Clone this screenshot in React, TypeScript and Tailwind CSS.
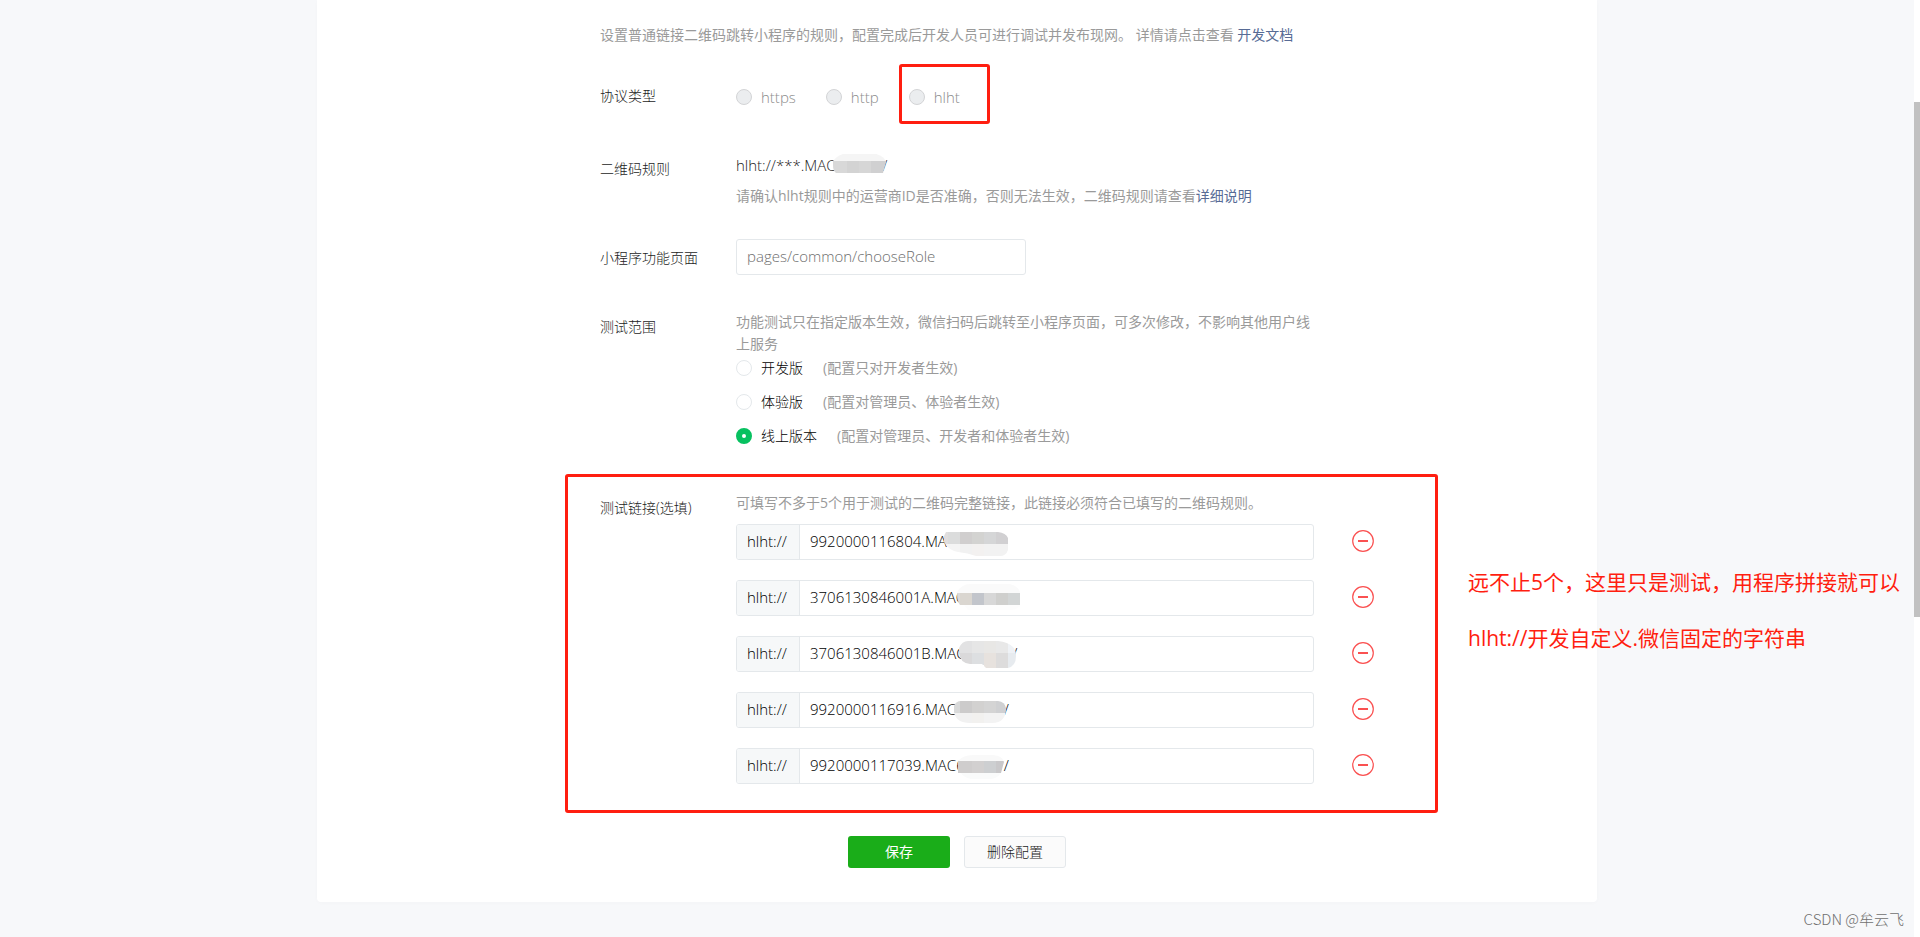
import { useState, type ReactNode } from "react";

type Cell = [x: number, y: number, w: number, h: number, fill: string];

interface MaskShape {
  left: string;
  width: number;
  height: number;
  clip: string;
  cells: Cell[];
}

interface TestLink {
  id: number;
  value: string;
  mask: MaskShape;
}

const TEST_LINKS: TestLink[] = [
  {
    id: 1,
    value: "9920000116804.MAC6          ",
    mask: {
      left: "left-[144px]",
      width: 64,
      height: 36,
      clip: "M2 8 H54 Q62 9 64 14 V26 Q62 32 56 32 H32 Q24 29 14 28 Q4 26 0 18 V12 Z",
      cells: [
        [0, 8, 4, 12, "#e0dede"],
        [4, 8, 12, 12, "#dbdcdc"],
        [16, 8, 12, 12, "#d0cece"],
        [28, 8, 12, 12, "#d3d3d1"],
        [40, 8, 12, 12, "#d5d6d7"],
        [52, 8, 12, 12, "#d1d0d2"],
        [0, 20, 16, 12, "#f4f4f4"],
        [16, 20, 12, 12, "#f1f1f1"],
        [28, 20, 12, 12, "#f3f1f0"],
        [40, 20, 24, 12, "#f2f2f2"],
      ],
    },
  },
  {
    id: 2,
    value: "3706130846001A.MAC           ",
    mask: {
      left: "left-[156px]",
      width: 64,
      height: 36,
      clip: "M1 12 Q6 4 14 4 H54 Q62 6 64 12 V26 Q60 30 54 30 H12 L8 25 H4 Q1 22 1 12 Z",
      cells: [
        [0, 4, 64, 9, "#fafafa"],
        [0, 13, 4, 12, "#dadada"],
        [4, 13, 12, 12, "#dad6d0"],
        [16, 13, 12, 12, "#c2c5cb"],
        [28, 13, 12, 12, "#d7d7d7"],
        [40, 13, 12, 12, "#cfcfcd"],
        [52, 13, 12, 12, "#d2d5d5"],
        [0, 25, 64, 5, "#fdfdfd"],
      ],
    },
  },
  {
    id: 3,
    value: "3706130846001B.MAC            /",
    mask: {
      left: "left-[158px]",
      width: 60,
      height: 36,
      clip: "M1 12 Q4 5 10 5 H40 Q50 6 55 11 Q58 14 58 20 Q58 30 50 32 H28 L24 28 H12 Q2 27 1 17 Z",
      cells: [
        [0, 5, 14, 12, "#e2e2e3"],
        [14, 5, 12, 12, "#e6e6e6"],
        [26, 5, 12, 12, "#e8e7e5"],
        [38, 5, 12, 12, "#e8e8e8"],
        [50, 5, 10, 12, "#eff2f6"],
        [0, 17, 14, 12, "#dad9da"],
        [14, 17, 12, 12, "#dddfe1"],
        [26, 17, 12, 15, "#e7e2de"],
        [38, 17, 12, 15, "#dddcdc"],
        [50, 17, 10, 15, "#e7ebef"],
      ],
    },
  },
  {
    id: 4,
    value: "9920000116916.MAC6          /",
    mask: {
      left: "left-[152px]",
      width: 56,
      height: 36,
      clip: "M2 14 Q4 9 9 9 H46 Q53 10 54 16 Q54 31 40 31 H18 Q4 31 2 20 Z",
      cells: [
        [0, 9, 8, 12, "#d9dada"],
        [8, 9, 12, 12, "#cccbcb"],
        [20, 9, 12, 12, "#d2d1d0"],
        [32, 9, 12, 12, "#d4d4d4"],
        [44, 9, 12, 12, "#cfd0d2"],
        [0, 21, 20, 11, "#f1f1f1"],
        [20, 21, 12, 11, "#f2f1ef"],
        [32, 21, 24, 11, "#f3f3f3"],
      ],
    },
  },
  {
    id: 5,
    value: "9920000117039.MAC6          /",
    mask: {
      left: "left-[157px]",
      width: 50,
      height: 36,
      clip: "M1 13 Q6 7 16 7 H36 Q46 8 47 14 L44 25 Q40 31 32 31 H14 Q6 29 4 25 H1 Z",
      cells: [
        [0, 7, 50, 6, "#f9f9f9"],
        [0, 13, 15, 12, "#cfcdcd"],
        [15, 13, 12, 12, "#d2d0d0"],
        [27, 13, 12, 12, "#cdcfd1"],
        [39, 13, 11, 12, "#c9c8ca"],
        [0, 25, 50, 6, "#fafbfb"],
      ],
    },
  },
];

const RULE_MASK: MaskShape = {
  left: "left-[96px]",
  width: 56,
  height: 26,
  clip: "M1 7 Q6 0 16 -1 H40 Q52 1 54 8 L51 19 H4 Q1 17 1 11 Z",
  cells: [
    [0, 0, 56, 7, "#f5f5f5"],
    [0, 7, 15, 12, "#d8d8d8"],
    [15, 7, 12, 12, "#d3d3d3"],
    [27, 7, 12, 12, "#d6d6d6"],
    [39, 7, 17, 12, "#d0d0d1"],
  ],
};

const SCOPES = [
  { id: "dev", name: "开发版", note: "(配置只对开发者生效)" },
  { id: "trial", name: "体验版", note: "(配置对管理员、体验者生效)" },
  { id: "online", name: "线上版本", note: "(配置对管理员、开发者和体验者生效)" },
];

function Mosaic({ id, shape }: { id: string; shape: MaskShape }) {
  return (
    <svg
      className={`pointer-events-none absolute top-0 ${shape.left}`}
      width={shape.width}
      height={shape.height}
      aria-hidden="true"
    >
      <clipPath id={id}>
        <path d={shape.clip} />
      </clipPath>
      <g clipPath={`url(#${id})`} shapeRendering="crispEdges">
        {shape.cells.map(([x, y, w, h, fill], i) => (
          <rect key={i} x={x} y={y} width={w} height={h} fill={fill} />
        ))}
      </g>
    </svg>
  );
}

function Row({ label, labelClass, children }: { label: ReactNode; labelClass: string; children: ReactNode }) {
  return (
    <div className="flex">
      <div className={`w-[136px] shrink-0 ${labelClass}`}>{label}</div>
      <div className="min-w-0 flex-1">{children}</div>
    </div>
  );
}

export default function App() {
  const [scope, setScope] = useState("online");
  const [page, setPage] = useState("pages/common/chooseRole");
  const [links, setLinks] = useState(TEST_LINKS);

  return (
    <div className="relative flex min-h-screen bg-[#f7f8fa] font-['Open_Sans','Noto_Sans_CJK_SC',sans-serif] text-sm leading-[22px] font-light text-[#1c1c1c]">
      <div className="min-w-0 flex-1">
        <main className="mx-auto max-w-[1280px] rounded-b-sm bg-white pt-6 pb-[34px] shadow-[0_1px_4px_rgba(0,0,0,0.02)]">
          <div className="pr-[159px] pl-[248px]">
            <div className="px-[35px]">
              <p className="font-normal text-[#9a9a9a]">
                设置普通链接二维码跳转小程序的规则，配置完成后开发人员可进行调试并发布现网。 详情请点击查看{" "}
                <a href="#doc" className="text-[#576b95]">
                  开发文档
                </a>
              </p>

              <div className="mt-[39px]">
                <Row label="协议类型" labelClass="">
                  <div className="flex gap-[30px] pt-px text-[15px] text-[#8c8c8c]">
                    {["https", "http", "hlht"].map((name) => (
                      <label key={name} className="relative flex items-center gap-[9px]">
                        <input
                          type="radio"
                          name="protocol"
                          disabled
                          className="size-4 appearance-none rounded-full border border-[#d3d4d6] bg-[#ebedef]"
                        />
                        {name}
                        {name === "hlht" && (
                          <span className="absolute -top-[22px] -left-[10px] h-[60px] w-[91px] rounded-[3px] border-3 border-[#ff1e10]" />
                        )}
                      </label>
                    ))}
                  </div>
                </Row>
              </div>

              <div className="mt-[46px]">
                <Row label="二维码规则" labelClass="pt-1">
                  <div className="relative text-[15px]">
                    <span className="whitespace-pre">hlht://***.MAC{"            "}/</span>
                    <Mosaic id="mask-rule" shape={RULE_MASK} />
                  </div>
                  <p className="mt-[9px] font-normal text-[#9a9a9a]">
                    请确认hlht规则中的运营商ID是否准确，否则无法生效，二维码规则请查看
                    <a href="#detail" className="text-[#576b95]">
                      详细说明
                    </a>
                  </p>
                </Row>
              </div>

              <div className="mt-8">
                <Row label={<label htmlFor="page-path">小程序功能页面</label>} labelClass="pt-2">
                  <input
                    id="page-path"
                    type="text"
                    value={page}
                    onChange={(e) => setPage(e.target.value)}
                    className="block h-9 w-[290px] rounded-[3px] border border-[#e4e8eb] bg-white px-[10px] pb-[2px] text-[15px] text-[#6e6e6e] outline-none"
                  />
                </Row>
              </div>

              <div className="mt-9">
                <Row label="测试范围" labelClass="pt-[5px]">
                  <p className="max-w-[578px] font-normal text-[#9a9a9a]">
                    功能测试只在指定版本生效，微信扫码后跳转至小程序页面，可多次修改，不影响其他用户线上服务
                  </p>
                  <div className="mt-[2px] flex flex-col gap-3">
                    {SCOPES.map((s) => (
                      <label key={s.id} className="flex items-center">
                        <input
                          type="radio"
                          name="scope"
                          checked={scope === s.id}
                          onChange={() => setScope(s.id)}
                          className="size-4 appearance-none rounded-full border border-[#e4e8eb] bg-white checked:border-[6px] checked:border-[#07c160]"
                        />
                        <span className="ml-[9px] text-black">{s.name}</span>
                        <span className="ml-5 font-normal text-[#9a9a9a]">{s.note}</span>
                      </label>
                    ))}
                  </div>
                </Row>
              </div>
            </div>

            <section className="relative mt-[27px] rounded-[3px] border-3 border-[#ff1e10] pt-[15px] pb-[26px] pl-8">
              <Row label="测试链接(选填)" labelClass="pt-[5px]">
                <p className="font-normal text-[#9a9a9a]">
                  可填写不多于5个用于测试的二维码完整链接，此链接必须符合已填写的二维码规则。
                </p>
                <div className="mt-[10px] flex flex-col gap-5">
                  {links.map((link) => (
                    <div key={link.id} className="flex items-center gap-[38px] pr-[61px]">
                      <div className="relative flex h-9 min-w-0 flex-1 rounded-[3px] border border-[#e4e8eb] text-[15px] text-black">
                        <label
                          htmlFor={`link-${link.id}`}
                          className="flex w-[63px] shrink-0 items-center rounded-l-[2px] border-r border-[#e4e8eb] bg-[#f6f8f9] pb-[2px] pl-[10px]"
                        >
                          hlht://
                        </label>
                        <div className="relative -my-px min-w-0 flex-1">
                          <input
                            id={`link-${link.id}`}
                            type="text"
                            value={link.value}
                            onChange={(e) =>
                              setLinks(links.map((l) => (l.id === link.id ? { ...l, value: e.target.value } : l)))
                            }
                            className="h-full w-full bg-transparent px-[10px] pb-[2px] outline-none"
                          />
                          <Mosaic id={`mask-${link.id}`} shape={link.mask} />
                        </div>
                      </div>
                      <button
                        type="button"
                        aria-label="删除链接"
                        onClick={() => setLinks(links.filter((l) => l.id !== link.id))}
                        className="shrink-0 pb-[2px]"
                      >
                        <svg
                          className="block"
                          width="22"
                          height="22"
                          viewBox="0 0 22 22"
                          fill="none"
                          stroke="#fa5151"
                        >
                          <circle cx="11" cy="11" r="10.3" strokeWidth="1.2" />
                          <path d="M6 11h10" strokeWidth="2" />
                        </svg>
                      </button>
                    </div>
                  ))}
                </div>
              </Row>

              <p className="absolute top-[77px] left-full ml-[33px] text-[21px] leading-[56px] font-normal whitespace-nowrap text-[#ff1e10]">
                远不止5个，这里只是测试，用程序拼接就可以
                <br />
                hlht://开发自定义.微信固定的字符串
              </p>
            </section>
          </div>

          <div className="mt-[23px] flex justify-center gap-[14px]">
            <button type="button" className="h-8 w-[102px] rounded-[3px] bg-[#1aad19] font-normal text-white">
              保存
            </button>
            <button type="button" className="h-8 w-[102px] rounded-[3px] border border-[#e4e8eb] bg-[#fbfbfb]">
              删除配置
            </button>
          </div>
        </main>
      </div>

      <div className="w-[6px] shrink-0 bg-white pt-[102px]">
        <div className="h-[515px] bg-[#c1c1c1]" />
      </div>

      <div className="absolute right-4 bottom-[7px] font-['Noto_Sans_CJK_SC',sans-serif] text-[15px] text-[#707070]">
        CSDN @牟云飞
      </div>
    </div>
  );
}
